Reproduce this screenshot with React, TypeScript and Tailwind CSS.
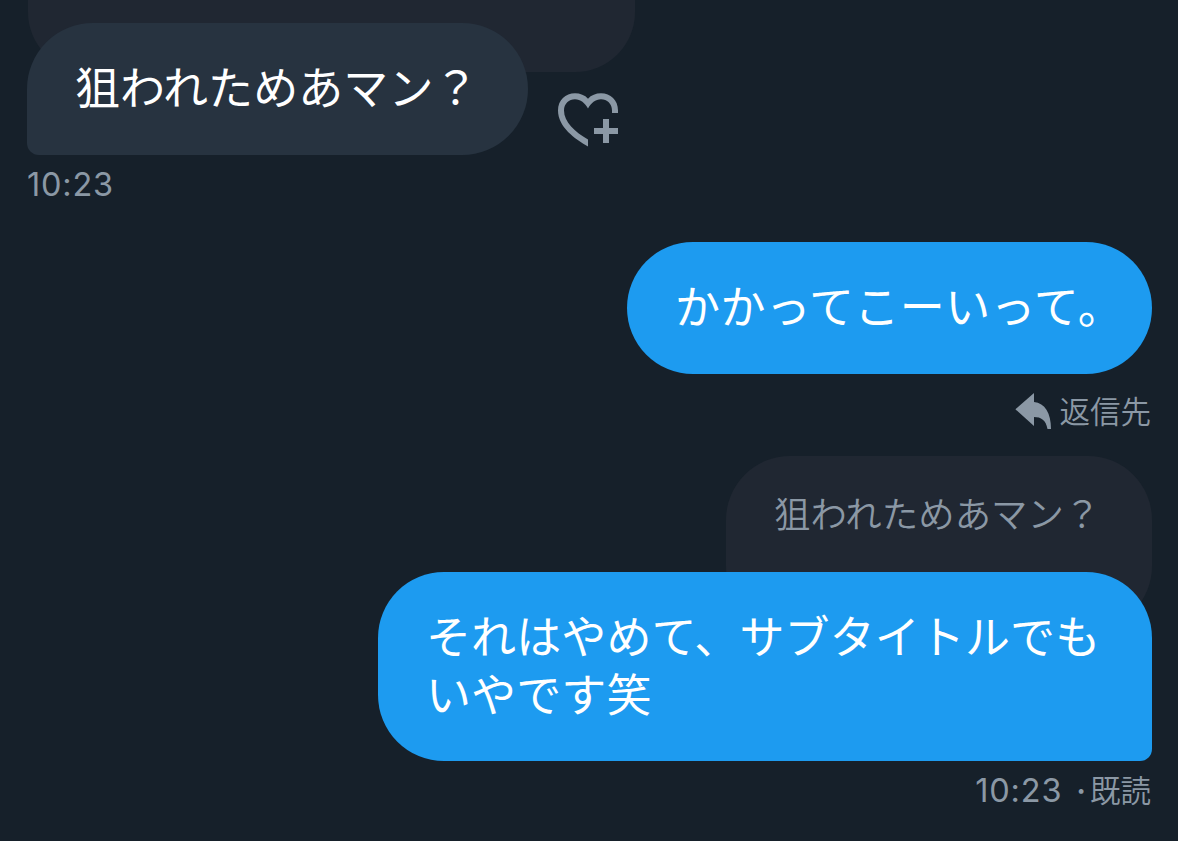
import type { ReactNode } from 'react'

function HeartPlus() {
  return (
    <svg viewBox="0 0 60 54" className="h-[54px] w-[60px] fill-[#8b98a5]">
      <path d="M30 53.5C17 46 0 34 0 17.5C0 7 7.5 0.3 17 0.3C22 0.3 27 2.2 30 5.7C33 2.2 38 0.3 43 0.3C52.5 0.3 60 7 60 17.5V20H54V17.5C54 10.5 49 6.2 43 6.2C37.5 6.2 33 10 30 15.5C27 10 22.5 6.2 17 6.2C11 6.2 6 10.5 6 17.5C6 29 17 39 30 46.5Z" />
      <path d="M45 26H51V35H60V41H51V50H45V41H36V35H45Z" />
    </svg>
  )
}

function ReplyArrow() {
  return (
    <svg viewBox="0 0 36 36" className="h-[36px] w-[36px] fill-[#8b98a5]">
      <path d="M0.4 16.3L19 0V9C30 10 36 20 36 36H32.5C31 27 26 24 19 24V33Z" />
    </svg>
  )
}

function Bubble({ className, children }: { className: string; children: ReactNode }) {
  return (
    <div className={`relative rounded-[66px] py-[37px] pl-[48px] text-[45px] leading-[57.5px] whitespace-nowrap text-white ${className}`}>
      {children}
    </div>
  )
}

export default function App() {
  return (
    <main className="flex h-[841px] w-[1178px] flex-col overflow-hidden bg-[#16202a] pr-[26px] pl-[27px] font-['Inter','Noto_Sans_CJK_JP',sans-serif] font-normal">
      <div className="ml-px h-[72px] w-[607px] shrink-0 rounded-b-[60px] bg-[#202732]" />
      <div className="-mt-[49px] flex h-[132px] shrink-0 items-end gap-[30px]">
        <Bubble className="h-[132px] w-[501px] rounded-bl-[12px] bg-[#273340] tracking-[0.1px]">狙われためあマン？</Bubble>
        <div className="pb-[8px]">
          <HeartPlus />
        </div>
      </div>
      <div className="h-[87px] shrink-0 pt-[10px] text-[32.5px] leading-[40px] tracking-[0.8px] text-[#8b98a5]">10:23</div>

      <div className="flex shrink-0 flex-col items-end">
        <Bubble className="h-[132px] w-[525px] bg-[#1d9bf0] tracking-[0.4px]">かかってこーいって。</Bubble>
        <div className="flex h-[82px] items-start gap-[9px] pt-[19px] pr-px text-[30.5px] leading-[38px] font-[350] text-[#8b98a5]">
          <ReplyArrow />
          <span>返信先</span>
        </div>
        <div className="h-[174px] w-[426px] rounded-[64px] bg-[#202732] pt-[35px] pl-[48px] text-[36.4px] leading-[48px] font-[350] tracking-[0.1px] whitespace-nowrap text-[#8b98a5]">
          狙われためあマン？
        </div>
        <Bubble className="-mt-[58px] h-[189px] w-[774px] rounded-br-[12px] bg-[#1d9bf0] tracking-[0.1px]">
          それはやめて、サブタイトルでも
          <br />
          いやです笑
        </Bubble>
        <div className="flex pt-[10px] pr-px text-[30.5px] leading-[40px] font-[350] text-[#8b98a5]">
          <span className="text-[32.5px] font-normal tracking-[0.8px]">10:23</span>
          <span className="ml-[14px] font-semibold">·</span>
          <span className="ml-[4px]">既読</span>
        </div>
      </div>
    </main>
  )
}
